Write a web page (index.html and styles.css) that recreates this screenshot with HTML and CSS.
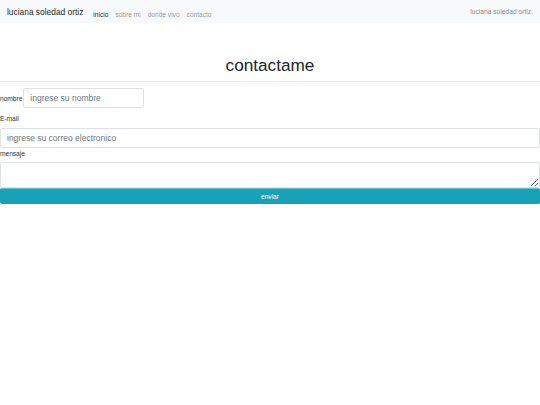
FILE: index.html
```html
<!DOCTYPE html>
<html lang="es">
<head>
<meta charset="utf-8">
<title>contactame</title>
<link rel="stylesheet" href="styles.css">
</head>
<body>
<nav class="navbar">
  <a class="brand" href="#">luciana soledad ortiz</a>
  <ul class="nav-links">
    <li><a class="active" href="#">inicio</a></li>
    <li><a href="#">sobre mi</a></li>
    <li><a href="#">donde vivo</a></li>
    <li><a href="#">contacto</a></li>
  </ul>
  <span class="nav-text">luciana soledad ortiz.</span>
</nav>
<h1 class="title">contactame</h1>
<hr class="divider">
<form class="contact-form">
  <div class="inline-row">
    <label class="label" for="nombre">nombre</label>
    <input class="field field-short" id="nombre" type="text" placeholder="ingrese su nombre">
  </div>
  <label class="label label-block label-email" for="email">E-mail</label>
  <input class="field field-full" id="email" type="email" placeholder="ingrese su correo electronico">
  <label class="label label-block label-msg" for="mensaje">mensaje</label>
  <textarea class="field field-area" id="mensaje"></textarea>
  <button class="btn-send" type="submit">enviar</button>
</form>
</body>
</html>
```

FILE: styles.css
```css
* { box-sizing: border-box; }
html, body { margin: 0; padding: 0; background: #fff; }
body {
  font-family: "Liberation Sans", Arial, sans-serif;
  color: #212529;
  width: 540px;
}
.navbar {
  display: flex;
  align-items: center;
  height: 23px;
  padding: 0 7px;
  background: #f8f9fa;
}
.brand {
  font-size: 8.4px;
  color: rgba(0,0,0,.9);
  text-decoration: none;
  margin-right: 10px;
}
.nav-links {
  display: flex;
  gap: 7px;
  list-style: none;
  margin: 0;
  padding: 0;
}
.nav-links a {
  font-size: 6.6px;
  color: rgba(0,0,0,.45);
  text-decoration: none;
}
.nav-links a.active { color: rgba(0,0,0,.9); }
.nav-text {
  margin-left: auto;
  font-size: 6.7px;
  color: rgba(0,0,0,.5);
}
.title {
  margin: 32px 0 0;
  font-size: 17.2px;
  line-height: 20px;
  font-weight: 400;
  text-align: center;
  color: #212529;
}
.divider {
  margin: 6px 0 0;
  border: 0;
  border-top: 1px solid #e9ecef;
  height: 0;
}
.contact-form { display: block; }
.inline-row {
  display: flex;
  align-items: center;
  margin-top: 6px;
}
.label {
  font-size: 6.6px;
  color: #333;
}
.label-block {
  display: block;
  line-height: 10px;
}
.label-email { margin: 6px 0 4px; }
.label-msg { margin: 1px 0 3px; }
.field {
  display: block;
  height: 20px;
  border: 1px solid #dfe2e5;
  border-radius: 2px;
  padding: 0 6px;
  font-family: "Liberation Sans", Arial, sans-serif;
  font-size: 8.5px;
  color: #495057;
  background: #fff;
  margin: 0;
  outline: none;
}
.field::placeholder { color: #6c757d; }
.field-short { width: 121px; margin-left: 1px; }
.field-full { width: 540px; }
.field-area {
  width: 540px;
  height: 26px;
  resize: vertical;
}
.btn-send {
  display: block;
  width: 540px;
  height: 16px;
  margin: 0;
  padding: 0;
  border: 1px solid #17a2b8;
  border-top-color: #5fc2d2;
  border-radius: 2px;
  background: #17a2b8;
  color: #fff;
  font-family: "Liberation Sans", Arial, sans-serif;
  font-size: 6.6px;
}
```
